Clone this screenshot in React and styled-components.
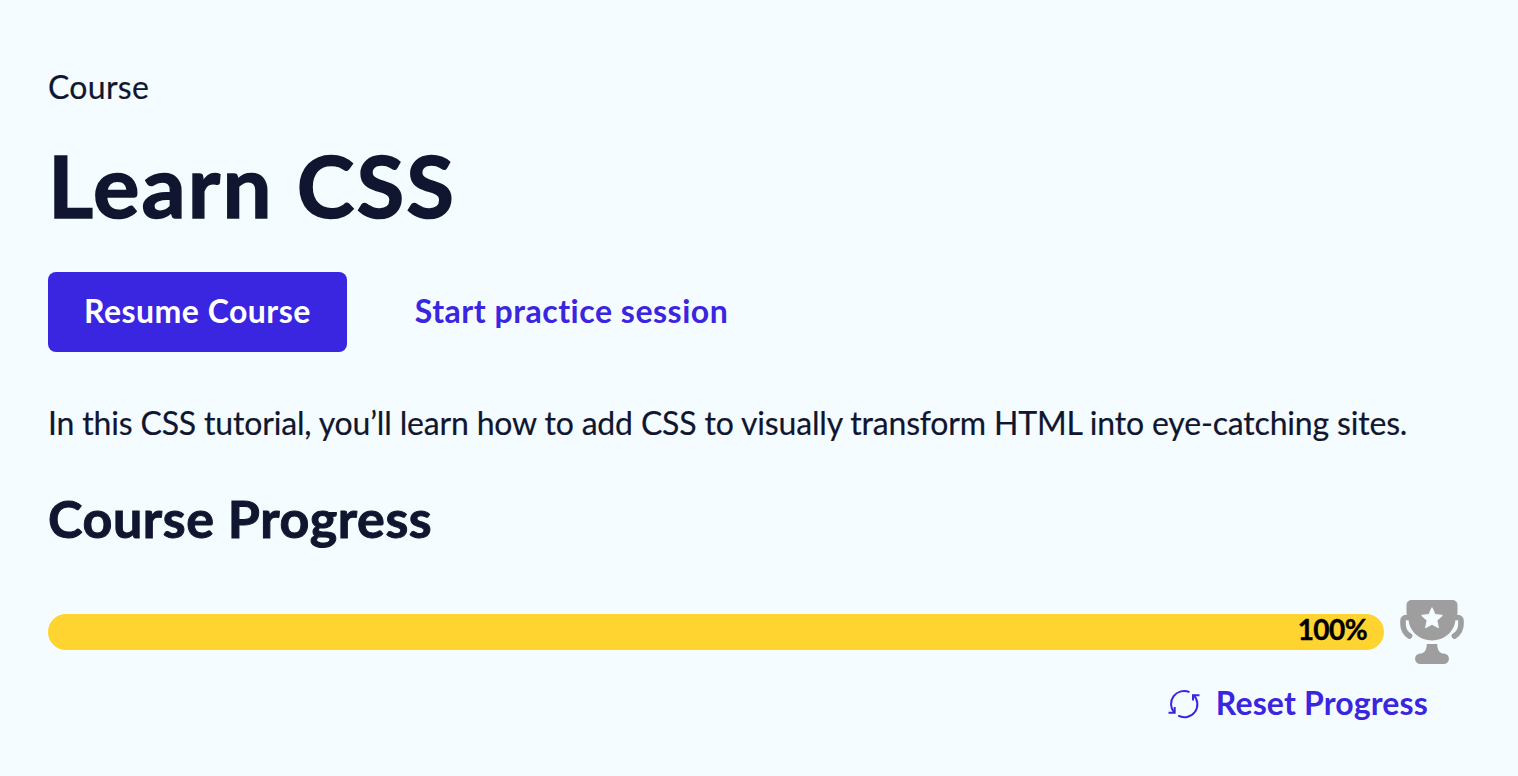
import React from "react";
import styled, { createGlobalStyle } from "styled-components";

const GlobalStyle = createGlobalStyle`
  * { box-sizing: border-box; }
  body {
    margin: 0;
    background: #f5fcff;
    color: #10162f;
    font-family: Lato, "Liberation Sans", sans-serif;
    font-size: 32px;
    font-variant-ligatures: none;
  }
  h1, h2, p { margin: 0; }
`;

const Page = styled.main`
  height: 776px;
  padding: 63px 54px 0 48px;
  overflow: hidden;
`;

const Line = styled.span`
  display: inline-block;
  white-space: nowrap;
  letter-spacing: ${(p) => p.$track || 0}px;
`;

const Eyebrow = styled.p`
  line-height: 48px;
  -webkit-text-stroke: 0.2px currentColor;
`;

const Title = styled.h1`
  margin-top: 21px;
  font-size: 87px;
  line-height: 106px;
  font-weight: 700;
  -webkit-text-stroke: 1.5px currentColor;
`;

const Actions = styled.div`
  display: flex;
  margin-top: 34px;
  gap: 32px;
`;

const Button = styled.button`
  height: 80px;
  padding: 0 36px 4px;
  border: 0;
  border-radius: 8px;
  background: ${(p) => (p.$primary ? "#3a25e0" : "transparent")};
  color: ${(p) => (p.$primary ? "#ffffff" : "#3a25e0")};
  font: inherit;
  font-weight: 700;
  white-space: nowrap;
  cursor: pointer;
`;

const Description = styled.p`
  margin-top: 47px;
  line-height: 48px;
  -webkit-text-stroke: 0.2px currentColor;
`;

const Subtitle = styled.h2`
  margin-top: 39px;
  font-size: 52px;
  line-height: 64px;
  font-weight: 700;
  -webkit-text-stroke: 1px currentColor;
`;

const ProgressRow = styled.div`
  display: flex;
  align-items: center;
  gap: 16px;
  margin-top: 50px;
`;

const Track = styled.div`
  flex: 1;
  height: 36px;
  border-radius: 18px;
`;

const Fill = styled.div`
  display: flex;
  justify-content: flex-end;
  height: 100%;
  padding-right: 17px;
  border-radius: 18px;
  background: #ffd330;
  color: #000000;
  font-size: 28px;
  line-height: 30px;
  font-weight: 700;
  -webkit-text-stroke: 0.4px currentColor;
`;

const ResetRow = styled.div`
  display: flex;
  justify-content: flex-end;
  padding-right: 36px;
`;

const ResetButton = styled(Button)`
  display: flex;
  align-items: center;
  gap: 16px;
  padding: 0;

  ${Line} {
    padding-bottom: 4px;
  }
`;

const TrophyIcon = () => (
  <svg width="64" height="64" viewBox="0 0 64 64" fill="#9e9e9e">
    <path d="M11.500 0h41a5 5 0 0 1 5 5V13L55.500 19.500C54.500 32.500 43.500 40.400 32 40.400S9.500 32.500 8.500 19.500L6.500 13V5A5 5 0 0 1 11.500 0Z" />
    <path d="M8 17.500H6a3 3 0 0 0-3 3V24C3 29.500 5.500 33.500 9.600 36M56 17.500h2a3 3 0 0 1 3 3V24C61 29.500 58.500 33.500 54.400 36" fill="none" stroke="#9e9e9e" strokeWidth="5.600" strokeLinecap="round" />
    <path d="M26.800 44h10.400c.2 5 1.300 8 5 9.500h1.500a5.200 5.200 0 0 1 0 10.500H20.300a5.200 5.200 0 0 1 0-10.500h1.500c3.700-1.500 4.800-4.500 5-9.500Z" />
    <path d="m32 8 2.900 6.600 7.100.8-5.300 4.900 1.500 7.200-6.200-3.600-6.200 3.600 1.500-7.200-5.300-4.900 7.100-.8Z" fill="#f5fcff" stroke="#f5fcff" strokeWidth="1.300" strokeLinejoin="round" />
  </svg>
);

const ResetIcon = () => (
  <svg width="32" height="32" viewBox="0 0 32 32" fill="none" stroke="#3a25e0" strokeWidth="2">
    <path d="M21.500 4.200A13 13 0 0 0 6.200 24.500M25.500 7A13 13 0 0 1 10.200 27.700" />
    <path d="M25 12.500V7.300h6.500M.5 24.700h6.200V19" />
  </svg>
);

export default function App() {
  return (
    <>
      <GlobalStyle />
      <Page>
        <Eyebrow><Line $track={0.3}>Course</Line></Eyebrow>
        <Title><Line $track={2.1}>Learn CSS</Line></Title>
        <Actions>
          <Button $primary><Line $track={0.47}>Resume Course</Line></Button>
          <Button><Line $track={0.52}>Start practice session</Line></Button>
        </Actions>
        <Description>
          <Line $track={-0.17}>In this CSS tutorial, you’ll learn how to add CSS to visually transform HTML into eye-catching sites.</Line>
        </Description>
        <Subtitle><Line $track={0.6}>Course Progress</Line></Subtitle>
        <ProgressRow>
          <Track><Fill><Line $track={-0.6}>100%</Line></Fill></Track>
          <TrophyIcon />
        </ProgressRow>
        <ResetRow>
          <ResetButton><ResetIcon /><Line $track={0.15}>Reset Progress</Line></ResetButton>
        </ResetRow>
      </Page>
    </>
  );
}
